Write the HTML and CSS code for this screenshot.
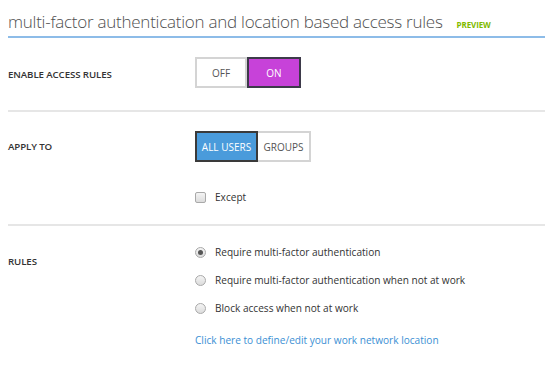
FILE: index.html
```html
<!DOCTYPE html>
<html>
<head>
<meta charset="utf-8">
<link rel="stylesheet" href="styles.css">
</head>
<body>
<div class="page">
  <div class="header">
    <h1 class="title">multi-factor authentication and location based access rules</h1>
    <span class="preview">PREVIEW</span>
  </div>
  <div class="section s-enable">
    <div class="label">ENABLE ACCESS RULES</div>
    <div class="control">
      <div class="toggle">
        <span class="tbtn off">OFF</span>
        <span class="tbtn on pink">ON</span>
      </div>
    </div>
  </div>
  <div class="section s-apply">
    <div class="label">APPLY TO</div>
    <div class="control">
      <div class="toggle">
        <span class="tbtn on blue">ALL USERS</span>
        <span class="tbtn off groups">GROUPS</span>
      </div>
      <label class="opt check-opt"><span class="checkbox"></span><span>Except</span></label>
    </div>
  </div>
  <div class="section s-rules">
    <div class="label">RULES</div>
    <div class="control rules">
      <label class="opt"><span class="radio checked"></span><span>Require multi-factor authentication</span></label>
      <label class="opt"><span class="radio"></span><span>Require multi-factor authentication when not at work</span></label>
      <label class="opt"><span class="radio"></span><span>Block access when not at work</span></label>
      <a class="link">Click here to define/edit your work network location</a>
    </div>
  </div>
</div>
</body>
</html>
```
FILE: styles.css
```css
html, body { margin: 0; padding: 0; background: #fff; }
body { font-family: "Open Sans", "Noto Sans", sans-serif; color: #333; }
.page { padding-left: 8px; }
.header {
  display: flex;
  align-items: baseline;
  gap: 14px;
  height: 38px;
  border-bottom: 2px solid #8dbce8;
  box-sizing: border-box;
  padding-top: 11px;
}
.title {
  margin: 0;
  font-weight: 300;
  font-size: 17px;
  letter-spacing: -0.25px;
  color: #4f4f4f;
  line-height: 22px;
}
.preview {
  font-size: 8px;
  font-weight: 700;
  color: #7fba00;
  letter-spacing: -0.1px;
}
.section {
  display: flex;
  border-bottom: 2px solid #e6e6e6;
}
.s-rules { border-bottom: none; }
.label {
  width: 187px;
  font-size: 9.7px;
  font-weight: 600;
  color: #333;
  letter-spacing: -0.1px;
}
.s-enable { height: 74px; box-sizing: border-box; padding-top: 19px; }
.s-enable .label { padding-top: 11px; }
.s-apply { height: 114px; box-sizing: border-box; padding-top: 19px; }
.s-apply .label { padding-top: 9px; }
.s-rules { padding-top: 19px; }
.s-rules .label { padding-top: 10px; }
.control { display: flex; flex-direction: column; }
.toggle { display: flex; }
.tbtn {
  height: 31px;
  box-sizing: border-box;
  display: flex;
  align-items: center;
  justify-content: center;
  font-size: 10px;
  border: 2px solid #d4d4d4;
}
.off { background: #fff; color: #555; width: 52px; }
.off.groups { width: 53px; border-left: none; }
.on { border: 2px solid #3a3a3a; color: #fff; }
.pink { background: #c742d9; width: 54px; border-color: #3d3a4a; }
.blue { background: #4a9bdb; width: 63px; }
.opt {
  display: flex;
  align-items: center;
  gap: 9px;
  font-size: 10.1px;
  color: #333;
  height: 14px;
}
.check-opt { margin-top: 28px; }
.checkbox {
  width: 9px; height: 9px;
  border: 1px solid #a9a9a9;
  border-radius: 2px;
  background: linear-gradient(#f4f4f4, #dcdcdc);
}
.rules .opt { margin-bottom: 14px; }
.radio {
  width: 9px; height: 9px;
  border: 1px solid #a9a9a9;
  border-radius: 50%;
  background: linear-gradient(#f4f4f4, #dcdcdc);
  position: relative;
}
.radio.checked::after {
  content: "";
  position: absolute;
  left: 2px; top: 2px;
  width: 5px; height: 5px;
  border-radius: 50%;
  background: #555;
}
.link {
  font-size: 10.1px;
  color: #3b8fd4;
  margin-top: 4px;
}
```
